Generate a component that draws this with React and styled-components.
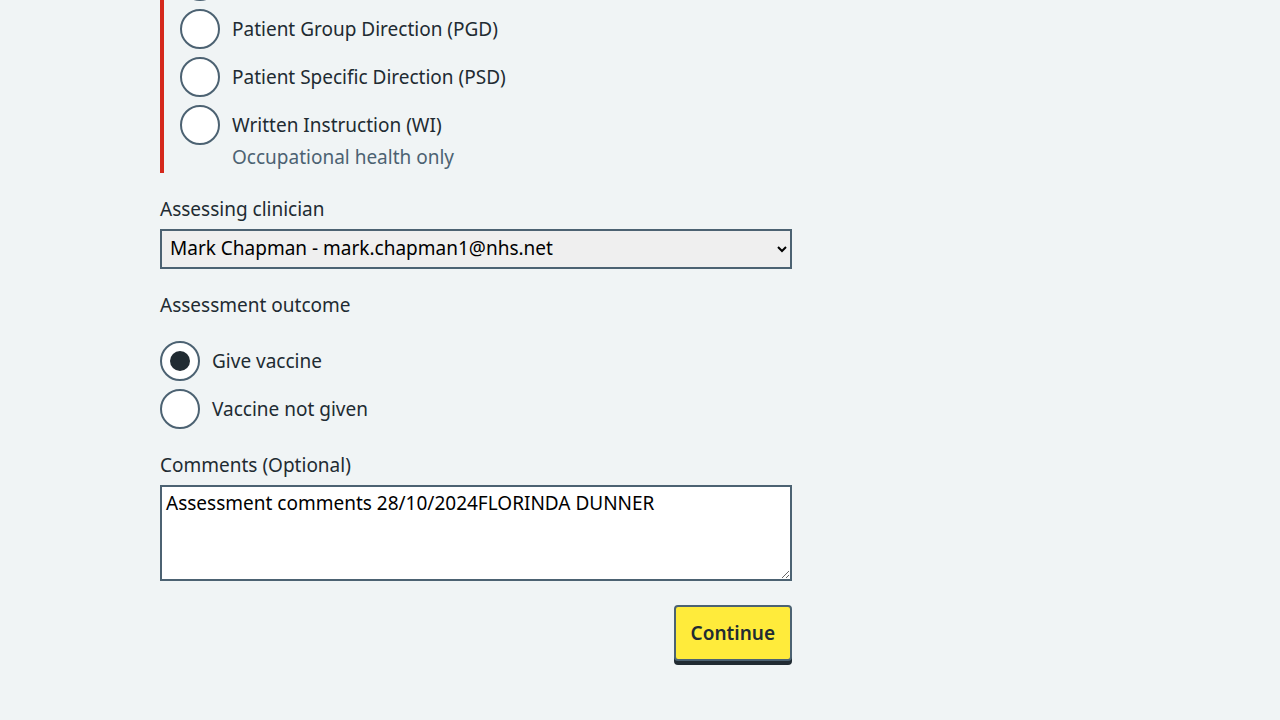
import styled, { createGlobalStyle } from "styled-components";

const GlobalStyle = createGlobalStyle`
  body {
    margin: 0;
    background: #f0f4f5;
    font-family: "Noto Sans", "Liberation Sans", sans-serif;
    color: #212b32;
  }
`;

const mechanisms = [
  { id: "protocol", label: "National Protocol" },
  { id: "pgd", label: "Patient Group Direction (PGD)" },
  { id: "psd", label: "Patient Specific Direction (PSD)" },
  { id: "wi", label: "Written Instruction (WI)", hint: "Occupational health only" },
];

const outcomes = [
  { id: "give", label: "Give vaccine", checked: true },
  { id: "not-given", label: "Vaccine not given" },
];

export default function App() {
  return (
    <>
      <GlobalStyle />
      <Main>
        <ErrorGroup>
          {mechanisms.map(m => (
            <RadioItem key={m.id}>
              <RadioRow>
                <Circle />
                <RadioLabel>{m.label}</RadioLabel>
              </RadioRow>
              {m.hint && <Hint>{m.hint}</Hint>}
            </RadioItem>
          ))}
        </ErrorGroup>

        <FormGroup>
          <Label htmlFor="clinician">Assessing clinician</Label>
          <Select id="clinician" defaultValue="mark">
            <option value="mark">Mark Chapman - mark.chapman1@nhs.net</option>
          </Select>
        </FormGroup>

        <FormGroup>
          <Legend>Assessment outcome</Legend>
          <Radios>
            {outcomes.map(o => (
              <RadioRow key={o.id}>
                <Circle $checked={o.checked} />
                <RadioLabel>{o.label}</RadioLabel>
              </RadioRow>
            ))}
          </Radios>
        </FormGroup>

        <FormGroup>
          <Label htmlFor="comments">Comments (Optional)</Label>
          <TextArea
            id="comments"
            rows={3}
            defaultValue="Assessment comments 28/10/2024FLORINDA DUNNER"
          />
        </FormGroup>

        <Actions>
          <ContinueButton>Continue</ContinueButton>
        </Actions>
      </Main>
    </>
  );
}

// page is shown scrolled: the first option of the group sits above the fold
const Main = styled.main`
  width: 632px;
  margin: -39px 0 0 160px;
  padding-bottom: 40px;
`;

const ErrorGroup = styled.div`
  border-left: 4px solid #d5281b;
  padding: 0 0 4px 16px;
  margin-bottom: 24px;
  display: flex;
  flex-direction: column;
  gap: 8px;
`;

const RadioItem = styled.div`
  display: flex;
  flex-direction: column;
`;

const RadioRow = styled.div`
  display: flex;
  align-items: center;
  gap: 12px;
  height: 40px;
`;

const Circle = styled.span`
  box-sizing: border-box;
  width: 40px;
  height: 40px;
  flex: none;
  border: 2px solid #4c6272;
  border-radius: 50%;
  background: #fff;
  display: flex;
  align-items: center;
  justify-content: center;

  &::after {
    content: "";
    display: ${p => (p.$checked ? "block" : "none")};
    width: 20px;
    height: 20px;
    border-radius: 50%;
    background: #212b32;
  }
`;

const RadioLabel = styled.span`
  font-size: 19px;
  line-height: 24px;
  color: #212b32;
`;

const Hint = styled.div`
  padding-left: 52px;
  font-size: 19px;
  line-height: 24px;
  color: #4c6272;
`;

const FormGroup = styled.div`
  margin-bottom: 24px;
`;

const Label = styled.label`
  display: block;
  font-size: 19px;
  line-height: 24px;
  margin-bottom: 8px;
`;

const Legend = styled.div`
  font-size: 19px;
  line-height: 24px;
  margin-bottom: 24px;
`;

const Radios = styled.div`
  display: flex;
  flex-direction: column;
  gap: 8px;
`;

const Select = styled.select`
  box-sizing: border-box;
  width: 100%;
  height: 40px;
  padding: 0 4px 2px 4px;
  border: 2px solid #4c6272;
  border-radius: 0;
  background-color: #efefef;
  color: #000;
  font-family: inherit;
  font-size: 19px;
`;

const TextArea = styled.textarea`
  box-sizing: border-box;
  display: block;
  width: 100%;
  height: 96px;
  margin-top: 1px;
  padding: 4px;
  border: 2px solid #4c6272;
  border-radius: 0;
  background: #fff;
  color: #000;
  font-family: inherit;
  font-size: 19px;
  line-height: 24px;
`;

const Actions = styled.div`
  display: flex;
  justify-content: flex-end;
`;

const ContinueButton = styled.button`
  box-sizing: border-box;
  height: 56px;
  padding: 0 15px;
  background: #ffeb3b;
  color: #212b32;
  border: 2px solid #4c6272;
  border-radius: 4px;
  box-shadow: 0 4px 0 #212b32;
  font-family: inherit;
  font-size: 19px;
  font-weight: 600;
  cursor: pointer;
`;
